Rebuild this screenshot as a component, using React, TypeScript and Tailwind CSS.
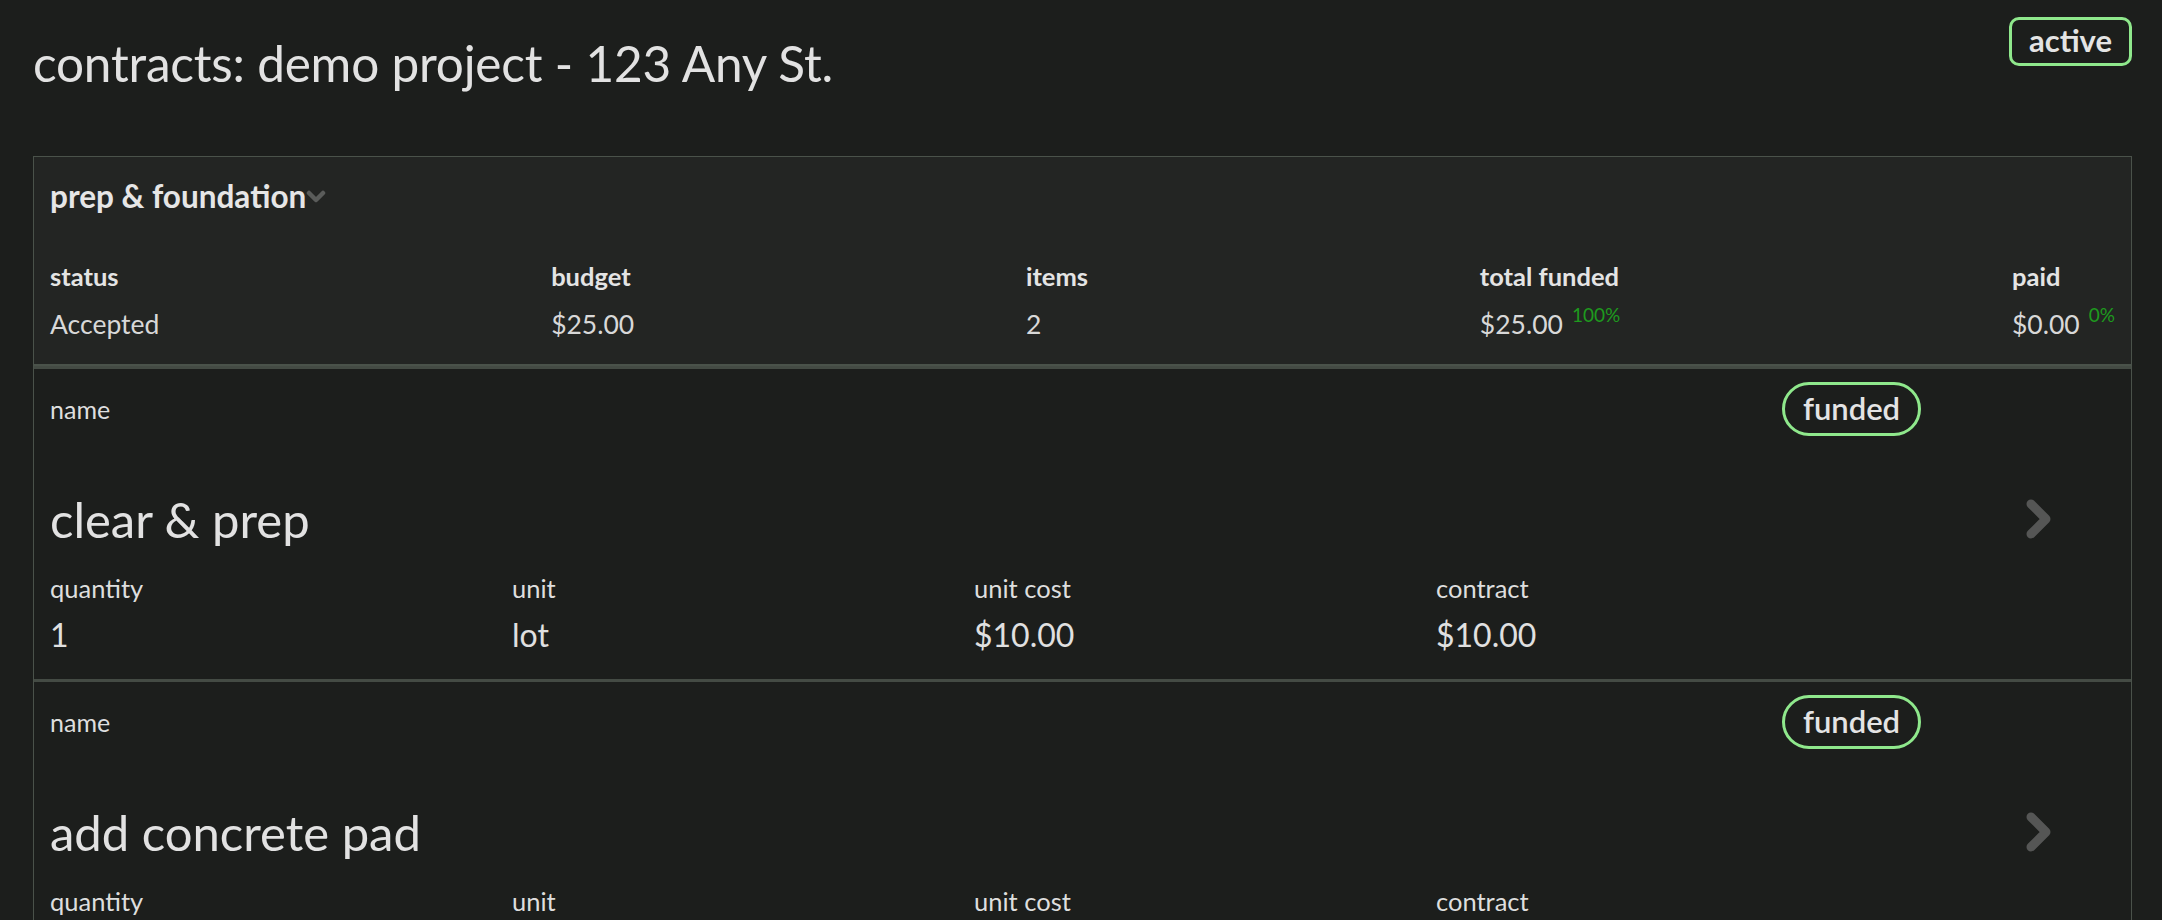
import React from "react";

const font = { fontFamily: "Lato, 'Noto Sans', sans-serif" };

function Chevron() {
  return (
    <svg width="28" height="42" viewBox="0 0 28 42" aria-hidden>
      <polyline
        points="6,6 21,21 6,36"
        fill="none"
        stroke="#555655"
        strokeWidth="9"
        strokeLinecap="round"
        strokeLinejoin="round"
      />
    </svg>
  );
}

function Stat({ label, value, pct }: { label: string; value: string; pct?: string }) {
  return (
    <div className="flex flex-col">
      <div className="text-[25.5px] leading-[28px] font-bold text-[#e4e4e4]">{label}</div>
      <div className="mt-[19px] flex items-start text-[26.5px] leading-[30px] text-[#d8d8d8]">
        {value}
        {pct && (
          <span className="ml-[9px] -mt-[4px] text-[19px] leading-[20px] text-[#1e9a1e]">{pct}</span>
        )}
      </div>
    </div>
  );
}

function Item({ name, qty, unit, cost, total }: { name: string; qty: string; unit: string; cost: string; total: string }) {
  const cols = [
    ["quantity", qty],
    ["unit", unit],
    ["unit cost", cost],
    ["contract", total],
  ];
  return (
    <div className="border-t-[3px] border-[#444b44] first:border-t-0 pl-[16px] pt-[13px] pb-[26px]">
      <div className="flex items-center justify-between pr-[210px] h-[54px]">
        <div className="text-[25px] leading-[28px] text-[#dedede]">name</div>
        <div className="h-[54px] w-[139px] rounded-full border-[3px] border-[#8fe88c] flex items-center justify-center text-[31px] font-semibold text-[#e4e4e4] leading-none pb-[2px]">
          funded
        </div>
      </div>
      <div className="mt-[55px] flex items-center justify-between pr-[78px] h-[56px]">
        <div className="text-[49px] leading-[56px] text-[#e2e2e2]">{name}</div>
        <Chevron />
      </div>
      <div className="mt-[27px] grid grid-cols-[repeat(4,462px)]">
        {cols.map(([l, v]) => (
          <div key={l} className="flex flex-col">
            <div className="text-[25.5px] leading-[28px] text-[#dedede]">{l}</div>
            <div className="mt-[15px] text-[32px] leading-[36px] text-[#e0e0e0]">{v}</div>
          </div>
        ))}
      </div>
    </div>
  );
}

export default function App() {
  return (
    <div className="min-h-screen bg-[#1c1e1c] pl-[33px] pr-[30px]" style={font}>
      <div className="flex items-start justify-between">
        <h1 className="mt-[34px] text-[49.5px] leading-[58px] font-normal text-[#e2e2e2] tracking-[-0.2px]">
          contracts: demo project - 123 Any St.
        </h1>
        <div className="mt-[17px] h-[49px] w-[123px] rounded-[10px] border-[3px] border-[#8fe88c] flex items-center justify-center text-[31px] font-bold text-[#e4e4e4] leading-none pb-[2px]">
          active
        </div>
      </div>
      <div className="mt-[64px] border border-[#4a524a]">
        <div className="bg-[#232523] border-b-2 border-[#4a524a] px-[16px] pt-[19px] pb-[25px]">
          <div className="flex items-center h-[40px]">
            <span className="text-[31.5px] font-bold text-[#e6e6e6] leading-[40px]">prep &amp; foundation</span>
            <svg width="20" height="14" viewBox="0 0 20 14" className="mt-[2px]" aria-hidden>
              <polyline points="3,3 10,10 17,3" fill="none" stroke="#5a5c5a" strokeWidth="4.5" strokeLinecap="round" strokeLinejoin="round" />
            </svg>
          </div>
          <div className="mt-[46px] flex justify-between">
            <Stat label="status" value="Accepted" />
            <Stat label="budget" value="$25.00" />
            <Stat label="items" value="2" />
            <Stat label="total funded" value="$25.00" pct="100%" />
            <Stat label="paid" value="$0.00" pct="0%" />
          </div>
        </div>
        <Item name="clear & prep" qty="1" unit="lot" cost="$10.00" total="$10.00" />
        <Item name="add concrete pad" qty="1" unit="lot" cost="$15.00" total="$15.00" />
      </div>
    </div>
  );
}
